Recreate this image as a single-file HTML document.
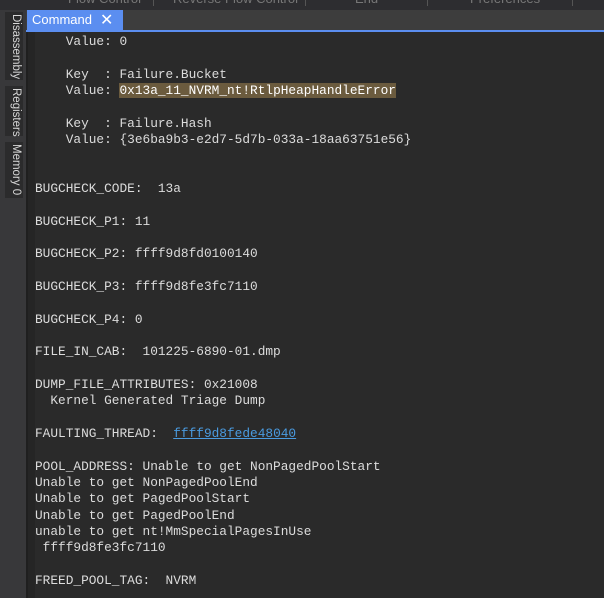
<!DOCTYPE html>
<html><head><style>
body{margin:0;width:604px;height:598px;background:#2a2a2a;overflow:hidden;position:relative;font-family:"Liberation Sans",sans-serif}
.top{position:absolute;left:0;top:0;width:604px;height:10px;background:#2d2d30;overflow:hidden}
.top span{position:absolute;top:-9px;color:#777;font-size:13px}
.top i{position:absolute;top:0;width:1px;height:6px;background:#555}
.side{position:absolute;left:0;top:10px;width:26px;height:588px;background:#38383a}
.vt{position:absolute;left:5px;width:18px;background:#2b2b2c;color:#d8d8d8;font-size:11.5px}
.vt span{position:absolute;left:2px;top:0;transform-origin:0 0;transform:translate(15px,2px) rotate(90deg);white-space:nowrap}
.tabbar{position:absolute;left:26px;top:10px;width:578px;height:20px;background:#3d3d3d}
.tab{position:absolute;left:27px;top:10px;width:96px;height:21px;background:#5b8ef0;color:#fff;font-size:13px;line-height:19px}
.blue{position:absolute;left:26px;top:30px;width:578px;height:2px;background:#5b8ef0}
.gut{position:absolute;left:26px;top:32px;width:2px;height:566px;background:#1f1f1f}
.gut2{position:absolute;left:28px;top:32px;width:7px;height:566px;background:#252525}
pre{position:absolute;left:35px;top:34px;margin:0;font-family:"Liberation Mono",monospace;font-size:12.8px;line-height:16.33px;color:#dcdcdc}
.hl{background:#6b5b3e;color:#fff}
a{color:#4a9be0;text-decoration:underline}
</style></head><body>
<div class="top"><span style="left:68px">Flow Control</span><i style="left:153px"></i><span style="left:173px">Reverse Flow Control</span><i style="left:305px"></i><span style="left:355px">End</span><i style="left:427px"></i><span style="left:470px">Preferences</span><i style="left:572px"></i></div>
<div class="side">
<div class="vt" style="top:2px;height:68px"><span>Disassembly</span></div>
<div class="vt" style="top:76px;height:50px"><span>Registers</span></div>
<div class="vt" style="top:132px;height:56px"><span>Memory 0</span></div>
</div>
<div class="tabbar"></div>
<div class="tab"><span style="margin-left:5px">Command</span><span style="position:absolute;left:73px;top:1px;font-size:16px;font-weight:100">✕</span></div>
<div class="blue"></div>
<div class="gut"></div><div class="gut2"></div>
<pre>    Value: 0

    Key  : Failure.Bucket
    Value: <span class="hl">0x13a_11_NVRM_nt!RtlpHeapHandleError</span>

    Key  : Failure.Hash
    Value: {3e6ba9b3-e2d7-5d7b-033a-18aa63751e56}


BUGCHECK_CODE:  13a

BUGCHECK_P1: 11

BUGCHECK_P2: ffff9d8fd0100140

BUGCHECK_P3: ffff9d8fe3fc7110

BUGCHECK_P4: 0

FILE_IN_CAB:  101225-6890-01.dmp

DUMP_FILE_ATTRIBUTES: 0x21008
  Kernel Generated Triage Dump

FAULTING_THREAD:  <a>ffff9d8fede48040</a>

POOL_ADDRESS: Unable to get NonPagedPoolStart
Unable to get NonPagedPoolEnd
Unable to get PagedPoolStart
Unable to get PagedPoolEnd
unable to get nt!MmSpecialPagesInUse
 ffff9d8fe3fc7110

FREED_POOL_TAG:  NVRM
</pre>
</body></html>
